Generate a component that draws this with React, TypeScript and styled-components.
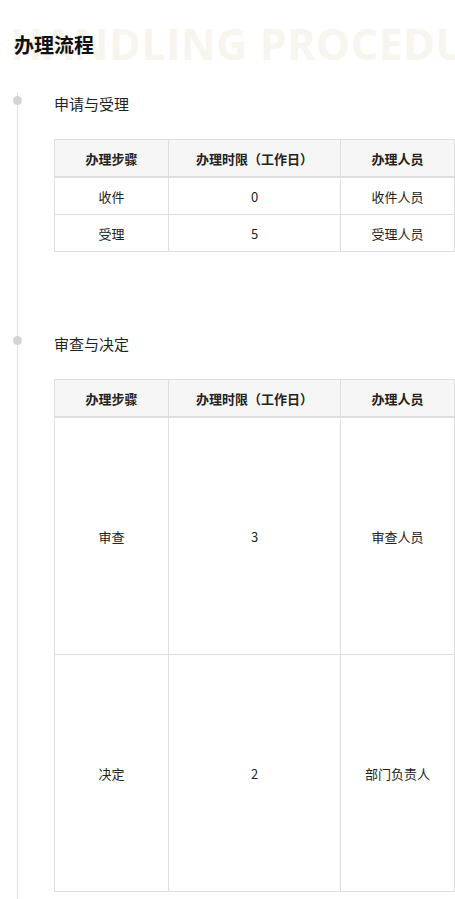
import React from "react";
import styled, { createGlobalStyle } from "styled-components";

const Global = createGlobalStyle`
  html, body { margin: 0; padding: 0; background: #fff; }
  body { font-family: "Noto Sans CJK SC", "Noto Sans", sans-serif; color: #333; }
`;

const Page = styled.div`
  width: 455px;
  overflow: hidden;
`;

const Header = styled.div`
  position: relative;
  height: 92px;
  padding: 0 14px;
`;

const Watermark = styled.div`
  position: absolute;
  left: 10px;
  top: 16px;
  font-family: "Open Sans", sans-serif;
  font-weight: 700;
  font-size: 43px;
  line-height: 56px;
  color: #f8f5ee;
  white-space: nowrap;
  letter-spacing: 0.5px;
`;

const Title = styled.h2`
  position: relative;
  margin: 0;
  padding-top: 31px;
  font-size: 20px;
  line-height: 28px;
  font-weight: 700;
  color: #111;
`;

const Timeline = styled.div`
  margin-left: 17px;
  border-left: 1px solid #e2e2e2;
  padding-left: 36px;
  padding-bottom: 20px;
`;

const Step = styled.div`
  position: relative;
  padding-bottom: 80px;
  &:last-child { padding-bottom: 8px; }
`;

const Dot = styled.span`
  position: absolute;
  left: -41px;
  top: 4px;
  width: 9px;
  height: 9px;
  border-radius: 50%;
  background: #d4d4d4;
`;

const StepTitle = styled.div`
  font-size: 15px;
  line-height: 24px;
  color: #222;
  margin-bottom: 23px;
`;

const Table = styled.table`
  width: 400px;
  border-collapse: collapse;
  table-layout: fixed;
  font-size: 13px;
`;

const Th = styled.th`
  height: 36px;
  padding: 0;
  background: #f6f6f6;
  border: 1px solid #dedede;
  border-bottom: 2px solid #dedede;
  font-weight: 700;
  color: #222;
  text-align: center;
`;

const Td = styled.td<{ $h: number }>`
  height: ${(p) => p.$h}px;
  padding: 0;
  border: 1px solid #dedede;
  text-align: center;
  color: #222;
`;

type Row = [string, string, string];

const steps: { title: string; rowH: number; rows: Row[] }[] = [
  { title: "申请与受理", rowH: 36, rows: [["收件", "0", "收件人员"], ["受理", "5", "受理人员"]] },
  { title: "审查与决定", rowH: 236, rows: [["审查", "3", "审查人员"], ["决定", "2", "部门负责人"]] },
];

export default function App() {
  return (
    <Page>
      <Global />
      <Header>
        <Watermark>HANDLING PROCEDURE</Watermark>
        <Title>办理流程</Title>
      </Header>
      <Timeline>
        {steps.map((s) => (
          <Step key={s.title}>
            <Dot />
            <StepTitle>{s.title}</StepTitle>
            <Table>
              <colgroup>
                <col style={{ width: 114 }} />
                <col style={{ width: 172 }} />
                <col style={{ width: 114 }} />
              </colgroup>
              <thead>
                <tr>
                  <Th>办理步骤</Th>
                  <Th>办理时限（工作日）</Th>
                  <Th>办理人员</Th>
                </tr>
              </thead>
              <tbody>
                {s.rows.map((r) => (
                  <tr key={r[0]}>
                    <Td $h={s.rowH}>{r[0]}</Td>
                    <Td $h={s.rowH}>{r[1]}</Td>
                    <Td $h={s.rowH}>{r[2]}</Td>
                  </tr>
                ))}
              </tbody>
            </Table>
          </Step>
        ))}
      </Timeline>
    </Page>
  );
}
